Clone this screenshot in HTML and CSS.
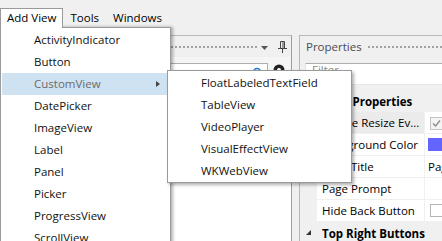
FILE: index.html
```html
<!DOCTYPE html>
<html>
<head>
<meta charset="utf-8">
<link rel="stylesheet" href="styles.css">
</head>
<body>
<div class="app">
  <nav class="menubar">
    <div class="mb-item active">Add View</div>
    <div class="mb-item">Tools</div>
    <div class="mb-item">Windows</div>
  </nav>

  <div class="workspace">
    <section class="panel toolbox">
      <header class="panel-head">
        <span class="grip"></span>
        <svg class="hd-arrow" width="7" height="4" viewBox="0 0 7 4"><path d="M0 0H7L3.5 4Z" fill="#555"/></svg>
        <svg class="hd-pin" width="9" height="12" viewBox="0 0 9 12"><path d="M2.5 0.5H6.5V7.5H2.5Z" fill="none" stroke="#444"/><path d="M5 1V7.5" stroke="#444"/><path d="M0 7.5H9" stroke="#444"/><path d="M4.5 8V12" stroke="#444"/></svg>
      </header>
      <div class="toolrow">
        <div class="search">
          <svg class="mag" width="11" height="11" viewBox="0 0 11 11"><circle cx="6" cy="5" r="3.5" fill="none" stroke="#1e7ad2" stroke-width="1.6"/><path d="M3.5 7.5L0.5 10.5" stroke="#1e7ad2" stroke-width="1.8"/></svg>
        </div>
        <svg class="info" width="12" height="12" viewBox="0 0 12 12"><circle cx="6" cy="6" r="5.5" fill="#222"/><circle cx="6" cy="6" r="2" fill="#fff"/></svg>
      </div>
      <div class="panel-body"></div>
    </section>

    <section class="panel props">
      <header class="panel-head">
        <span class="ptitle">Properties</span>
        <span class="grip"></span>
      </header>
      <div class="filter-row">
        <div class="filter">Filter</div>
      </div>
      <div class="grid">
        <div class="cat"><span class="exp"></span><span class="cat-name">Page Properties</span></div>
        <div class="row">
          <div class="name sel">Enable Resize Ev...</div>
          <div class="val"><span class="chk checked"><svg width="11" height="11" viewBox="0 0 11 11"><path d="M2 5.5L4.5 8L9 2.5" fill="none" stroke="#8a8a8a" stroke-width="1.3"/></svg></span></div>
        </div>
        <div class="row">
          <div class="name">Background Color</div>
          <div class="val"><span class="swatch"></span></div>
        </div>
        <div class="row">
          <div class="name">Page Title</div>
          <div class="val">Page</div>
        </div>
        <div class="row">
          <div class="name">Page Prompt</div>
          <div class="val"></div>
        </div>
        <div class="row">
          <div class="name">Hide Back Button</div>
          <div class="val"><span class="chk"></span></div>
        </div>
        <div class="cat"><span class="exp"></span><span class="cat-name">Top Right Buttons</span></div>
      </div>
    </section>
  </div>

  <div class="dropdown">
    <div class="mi">ActivityIndicator</div>
    <div class="mi">Button</div>
    <div class="mi hot">CustomView<span class="sub-arrow"></span></div>
    <div class="mi">DatePicker</div>
    <div class="mi">ImageView</div>
    <div class="mi">Label</div>
    <div class="mi">Panel</div>
    <div class="mi">Picker</div>
    <div class="mi">ProgressView</div>
    <div class="mi">ScrollView</div>
  </div>

  <div class="submenu">
    <div class="mi">FloatLabeledTextField</div>
    <div class="mi">TableView</div>
    <div class="mi">VideoPlayer</div>
    <div class="mi">VisualEffectView</div>
    <div class="mi">WKWebView</div>
  </div>
</div>
</body>
</html>
```

FILE: styles.css
```css
* { box-sizing: border-box; }

html, body {
  margin: 0;
  padding: 0;
}

body {
  background: #f0f0f0;
  font-family: "Open Sans", "Liberation Sans", sans-serif;
  font-size: 11.5px;
  color: #000;
  overflow: hidden;
  width: 442px;
  height: 241px;
}

.app {
  position: relative;
  width: 442px;
  height: 241px;
  overflow: hidden;
}

/* menu bar */
.menubar {
  display: flex;
  height: 27px;
  padding-top: 8px;
}

.mb-item {
  height: 19px;
  line-height: 17px;
  padding: 0 6px;
  border: 1px solid transparent;
  border-bottom: none;
  white-space: nowrap;
}

.mb-item.active {
  position: relative;
  z-index: 5;
  height: 20px;
  background: #fff;
  border-color: #9a9a9a;
}

/* workspace */
.workspace {
  display: flex;
  gap: 7px;
  margin-top: 8px;
  padding-left: 2px;
  height: 230px;
}

.panel {
  flex: none;
  display: flex;
  flex-direction: column;
  border: 1px solid #b8b8b8;
  background: #f0f0f0;
}

.toolbox {
  width: 290px;
  border-right-color: #9e9e9e;
}

.props {
  width: 170px;
  border-right: none;
}

.panel-head {
  display: flex;
  align-items: center;
  height: 21px;
  padding: 0 4px 0 6px;
  flex: none;
}

.ptitle {
  color: #4a4a55;
  white-space: nowrap;
}

.grip {
  flex: 1;
  height: 3px;
  margin: 1px 4px 0 6px;
  background-image: radial-gradient(circle at 1px 1px, #a0a0a0 0.7px, transparent 0.9px);
  background-size: 4px 3px;
}

.hd-arrow {
  flex: none;
  margin-top: 2px;
}

.hd-pin {
  flex: none;
  margin-left: 10px;
}

.toolrow {
  display: flex;
  align-items: flex-start;
  padding: 6px 3px 0 6px;
  background: #f5f5f5;
  height: 30px;
}

.search {
  flex: 1;
  height: 22px;
  background: #fff;
  border: 1px solid #abadb3;
  border-bottom-color: #e3e9ef;
  display: flex;
  justify-content: flex-end;
  padding: 3px 5px 0 0;
}

.info {
  flex: none;
  margin: 1px 3px 0 5px;
}

.panel-body {
  flex: 1;
  background: #fff;
}

/* properties */
.filter-row {
  padding: 6px 0 5px 5px;
  flex: none;
}

.filter {
  height: 22px;
  background: #fff;
  border: 1px solid #abadb3;
  border-left-color: #e2e3ea;
  border-bottom-color: #e3e9ef;
  border-right: none;
  color: #8a8a8a;
  padding-left: 6px;
  line-height: 11px;
}

.grid {
  display: flex;
  flex-direction: column;
}

.cat {
  display: flex;
  align-items: center;
  height: 22px;
  font-weight: bold;
  white-space: nowrap;
}

.exp {
  width: 22px;
  flex: none;
  position: relative;
  height: 22px;
}

.exp::after {
  content: "";
  position: absolute;
  left: 6px;
  top: 8px;
  border-style: solid;
  border-width: 0 0 5px 5px;
  border-color: transparent transparent #333 transparent;
}

.row {
  display: grid;
  grid-template-columns: 107px 1fr;
  column-gap: 1px;
  padding-left: 17px;
  height: 21px;
  margin-bottom: 1px;
}

.name, .val {
  background: #fff;
  white-space: nowrap;
  overflow: hidden;
  display: flex;
  align-items: center;
}

.name {
  padding-left: 5px;
}

.name.sel {
  background: #ebebeb;
}

.val {
  padding-left: 3px;
}

.chk {
  width: 13px;
  height: 13px;
  border: 1px solid #b5b5b5;
  background: #fff;
  margin-left: 2px;
  display: flex;
  align-items: center;
  justify-content: center;
  flex: none;
}

.chk.checked {
  background: #f4f4f4;
  border-color: #c4c4c4;
  margin-top: 1px;
}

.swatch {
  width: 20px;
  height: 13px;
  background: #6464ff;
  flex: none;
}

/* menus */
.dropdown {
  position: absolute;
  z-index: 4;
  left: 0;
  top: 27px;
  width: 171px;
  height: 240px;
  background: #fff;
  border: 1px solid #9a9a9a;
  padding: 1px 2px 0 1px;
  box-shadow: 2px 0 3px rgba(0, 0, 0, 0.3);
}

.mi {
  position: relative;
  height: 22px;
  line-height: 22px;
  padding-left: 32px;
  white-space: nowrap;
  color: #111;
}

.mi.hot {
  background: #cfe2f2;
  color: #6a6a6a;
}

.sub-arrow {
  position: absolute;
  right: 8px;
  top: 8px;
  border-style: solid;
  border-width: 3.5px 0 3.5px 4px;
  border-color: transparent transparent transparent #444;
}

.submenu {
  position: absolute;
  z-index: 6;
  left: 167px;
  top: 70px;
  width: 185px;
  height: 113px;
  background: #fff;
  border: 1px solid #9a9a9a;
  padding: 1px;
  box-shadow: 2px 2px 3px rgba(0, 0, 0, 0.3);
}
```
